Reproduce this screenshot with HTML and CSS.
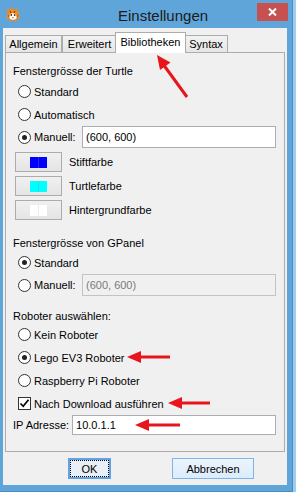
FILE: index.html
```html
<!DOCTYPE html>
<html lang="de">
<head>
    <meta charset="UTF-8">
    <link rel="stylesheet" href="styles.css">
    <title>Einstellungen</title>
</head>
<body>

<div class="window">
    <div class="titlebar">
        <svg class="app-icon" viewBox="0 0 16 16">
            <path d="M3 4 L2 1 L5 3 L7 0 L9 3 L12 1 L12 4 L15 5 L13 8 L15 11 L12 12 L11 15 L8 13 L5 15 L4 12 L1 11 L3 8 L1 5 Z" fill="#f08a1c"/>
            <path d="M5 4 L6 6 M10 4 L9 6 M3 9 L5 9 M13 9 L11 9" stroke="#7a3200" stroke-width="1"/>
            <ellipse cx="8" cy="9.5" rx="3.6" ry="3.2" fill="#fff"/>
            <circle cx="6.3" cy="8" r="0.9" fill="#5a2a00"/>
            <circle cx="9.7" cy="8" r="0.9" fill="#5a2a00"/>
            <path d="M7 10.3h2l-1 1.2z" fill="#c03000"/>
        </svg>
        <div class="title">Einstellungen</div>
        <div class="close">
            <svg width="9" height="8" viewBox="0 0 9 8">
                <path d="M1 0.5 L8 7.5 M8 0.5 L1 7.5" stroke="#fff" stroke-width="2"/>
            </svg>
        </div>
    </div>

    <div class="client">
        <div class="tabs">
            <div class="tab tab-general">Allgemein</div>
            <div class="tab tab-extended">Erweitert</div>
            <div class="tab tab-libs active">Bibliotheken</div>
            <div class="tab tab-syntax">Syntax</div>
        </div>

        <div class="panel">
            <div class="section-title">Fenstergrösse der Turtle</div>
            <div class="opt first"><span class="radio"></span>Standard</div>
            <div class="opt"><span class="radio"></span>Automatisch</div>
            <div class="opt short"><span class="radio checked"></span>Manuell:<div class="field size-field">(600, 600)</div></div>

            <div class="color-row first"><div class="color-btn"><span class="swatch blue"></span></div>Stiftfarbe</div>
            <div class="color-row"><div class="color-btn"><span class="swatch cyan"></span></div>Turtlefarbe</div>
            <div class="color-row"><div class="color-btn"><span class="swatch white"></span></div>Hintergrundfarbe</div>

            <div class="section-title gpanel-title">Fenstergrösse von GPanel</div>
            <div class="opt tight"><span class="radio checked"></span>Standard</div>
            <div class="opt short"><span class="radio"></span>Manuell:<div class="field size-field disabled">(600, 600)</div></div>

            <div class="section-title robot-title">Roboter auswählen:</div>
            <div class="opt"><span class="radio"></span>Kein Roboter</div>
            <div class="opt"><span class="radio checked"></span>Lego EV3 Roboter</div>
            <div class="opt"><span class="radio"></span>Raspberry Pi Roboter</div>
            <div class="opt"><span class="checkbox">
                <svg width="11" height="11" viewBox="0 0 11 11"><path d="M1.5 5.5 L4.2 8.3 L9.5 1.8" fill="none" stroke="#000" stroke-width="1.7"/></svg>
            </span>Nach Download ausführen</div>
            <div class="ip-row">IP Adresse:<div class="field ip-field">10.0.1.1</div></div>
        </div>

        <div class="dialog-buttons">
            <div class="btn btn-ok"><span>OK</span></div>
            <div class="btn btn-cancel">Abbrechen</div>
        </div>
    </div>

    <!-- annotation arrows drawn over the dialog -->
    <svg class="arrows" width="296" height="492" viewBox="0 0 296 492">
        <g fill="#e8161c" stroke="#e8161c">
            <line x1="187" y1="97" x2="163" y2="64" stroke-width="3"/>
            <polygon points="157,55 170.5,62.5 160,70" stroke="none"/>

            <line x1="170" y1="357" x2="137" y2="357" stroke-width="3"/>
            <polygon points="127,357 141,351 141,363" stroke="none"/>

            <line x1="210" y1="403" x2="178" y2="403" stroke-width="3"/>
            <polygon points="168,403 182,397 182,409" stroke="none"/>

            <line x1="180" y1="425" x2="145" y2="425" stroke-width="3"/>
            <polygon points="135,425 149,419 149,431" stroke="none"/>
        </g>
    </svg>
</div>

</body>
</html>
```

FILE: styles.css
```css
body {
    margin: 0;
    background-color: #9fcdef;
    font-family: "Liberation Sans", Arial, sans-serif;
    font-size: 11px;
    color: #000;
}

.window {
    position: relative;
    width: 292px;
    height: 491px;
    background-color: #60a5da;
    border-right: 1px solid #4a8bc0;
    border-bottom: 1px solid #4a8bc0;
}

/* title bar */
.titlebar {
    display: flex;
    align-items: flex-start;
    height: 28px;
}

.app-icon {
    width: 16px;
    height: 16px;
    margin: 7px 0 0 5px;
}

.title {
    margin: 7px 0 0 97px;
    font-size: 15px;
    line-height: 17px;
    color: #1b1b1b;
}

.close {
    display: flex;
    align-items: center;
    justify-content: center;
    width: 31px;
    height: 18px;
    margin: 3px 4px 0 auto;
    background-color: #c75050;
}

/* dialog body */
.client {
    width: 284px;
    height: 457px;
    margin-left: 3px;
    background-color: #f0f0f0;
}

.tabs {
    display: flex;
    align-items: flex-end;
    height: 24px;
    padding-left: 2px;
}

.tab {
    box-sizing: border-box;
    height: 17px;
    padding-top: 1px;
    line-height: 15px;
    text-align: center;
    border: 1px solid #acacac;
    border-bottom: none;
    background: linear-gradient(#f2f2f2, #e6e6e6);
}

.tab-general { width: 57px; }
.tab-extended { width: 55px; }
.tab-syntax { width: 44px; }

.tab.active {
    position: relative;
    z-index: 1;
    width: 71px;
    height: 21px;
    padding-top: 2px;
    margin: 0 -2px -1px -2px;
    background: #fff;
}

.panel {
    box-sizing: border-box;
    width: 280px;
    height: 400px;
    margin-left: 2px;
    padding: 11px 8px 0 7px;
    border: 1px solid #acacac;
    background-color: #f0f0f0;
}

.section-title {
    height: 14px;
    line-height: 14px;
}

.gpanel-title { margin-top: 16px; }
.robot-title { margin-top: 13px; }

.opt {
    display: flex;
    align-items: center;
    height: 23px;
    padding-left: 5px;
}

.opt.first { margin-top: 2px; }
.opt.tight { margin-top: 1px; }
.opt.short { height: 22px; }

.radio {
    display: flex;
    align-items: center;
    justify-content: center;
    box-sizing: border-box;
    width: 13px;
    height: 13px;
    margin-right: 3px;
    border: 1px solid #333;
    border-radius: 50%;
    background-color: #fff;
}

.radio.checked::after {
    content: "";
    width: 5px;
    height: 5px;
    border-radius: 50%;
    background-color: #222;
}

.checkbox {
    display: flex;
    align-items: center;
    justify-content: center;
    box-sizing: border-box;
    width: 13px;
    height: 13px;
    margin-right: 3px;
    border: 1px solid #333;
    background-color: #fff;
}

.field {
    box-sizing: border-box;
    padding-left: 3px;
    border: 1px solid #abadb3;
    background-color: #fff;
}

.size-field {
    width: 194px;
    height: 22px;
    margin-left: auto;
    line-height: 20px;
}

.field.disabled {
    border-color: #c3c3c3;
    background-color: #f0f0f0;
    color: #7a7a7a;
}

.color-row {
    display: flex;
    align-items: center;
    height: 20px;
    margin-top: 4px;
}

.color-btn {
    display: flex;
    align-items: center;
    justify-content: center;
    box-sizing: border-box;
    width: 47px;
    height: 20px;
    margin: 0 7px 0 2px;
    border: 1px solid #acacac;
    background: linear-gradient(#f0f0f0, #e5e5e5);
}

.swatch {
    width: 17px;
    height: 11px;
}

.swatch.blue { background: linear-gradient(90deg, #0000ff 8px, #2a2ae6 8px, #2a2ae6 9px, #0000ff 9px); }
.swatch.cyan { background: linear-gradient(90deg, #00ffff 8px, #22dde6 8px, #22dde6 9px, #00ffff 9px); }
.swatch.white { background: linear-gradient(90deg, #ffffff 8px, #ececec 8px, #ececec 9px, #ffffff 9px); }

.ip-row {
    display: flex;
    align-items: center;
    height: 20px;
}

.ip-field {
    flex: 1;
    height: 20px;
    margin-left: 3px;
    line-height: 18px;
}

.dialog-buttons {
    display: flex;
    margin-top: 6px;
    padding-left: 65px;
}

.btn {
    display: flex;
    align-items: center;
    justify-content: center;
    box-sizing: border-box;
    height: 21px;
}

.btn-ok {
    width: 43px;
    border: 2px solid #5fa2e6;
    background-color: #e8eff6;
}

.btn-ok span {
    display: flex;
    align-items: center;
    justify-content: center;
    width: 37px;
    height: 15px;
    outline: 1px dotted #000;
}

.btn-cancel {
    width: 82px;
    margin-left: 61px;
    border: 1px solid #7eb4ea;
    background: linear-gradient(#ecf4fc, #dcecfc);
}

.arrows {
    position: absolute;
    top: 0;
    left: 0;
    pointer-events: none;
}
```
